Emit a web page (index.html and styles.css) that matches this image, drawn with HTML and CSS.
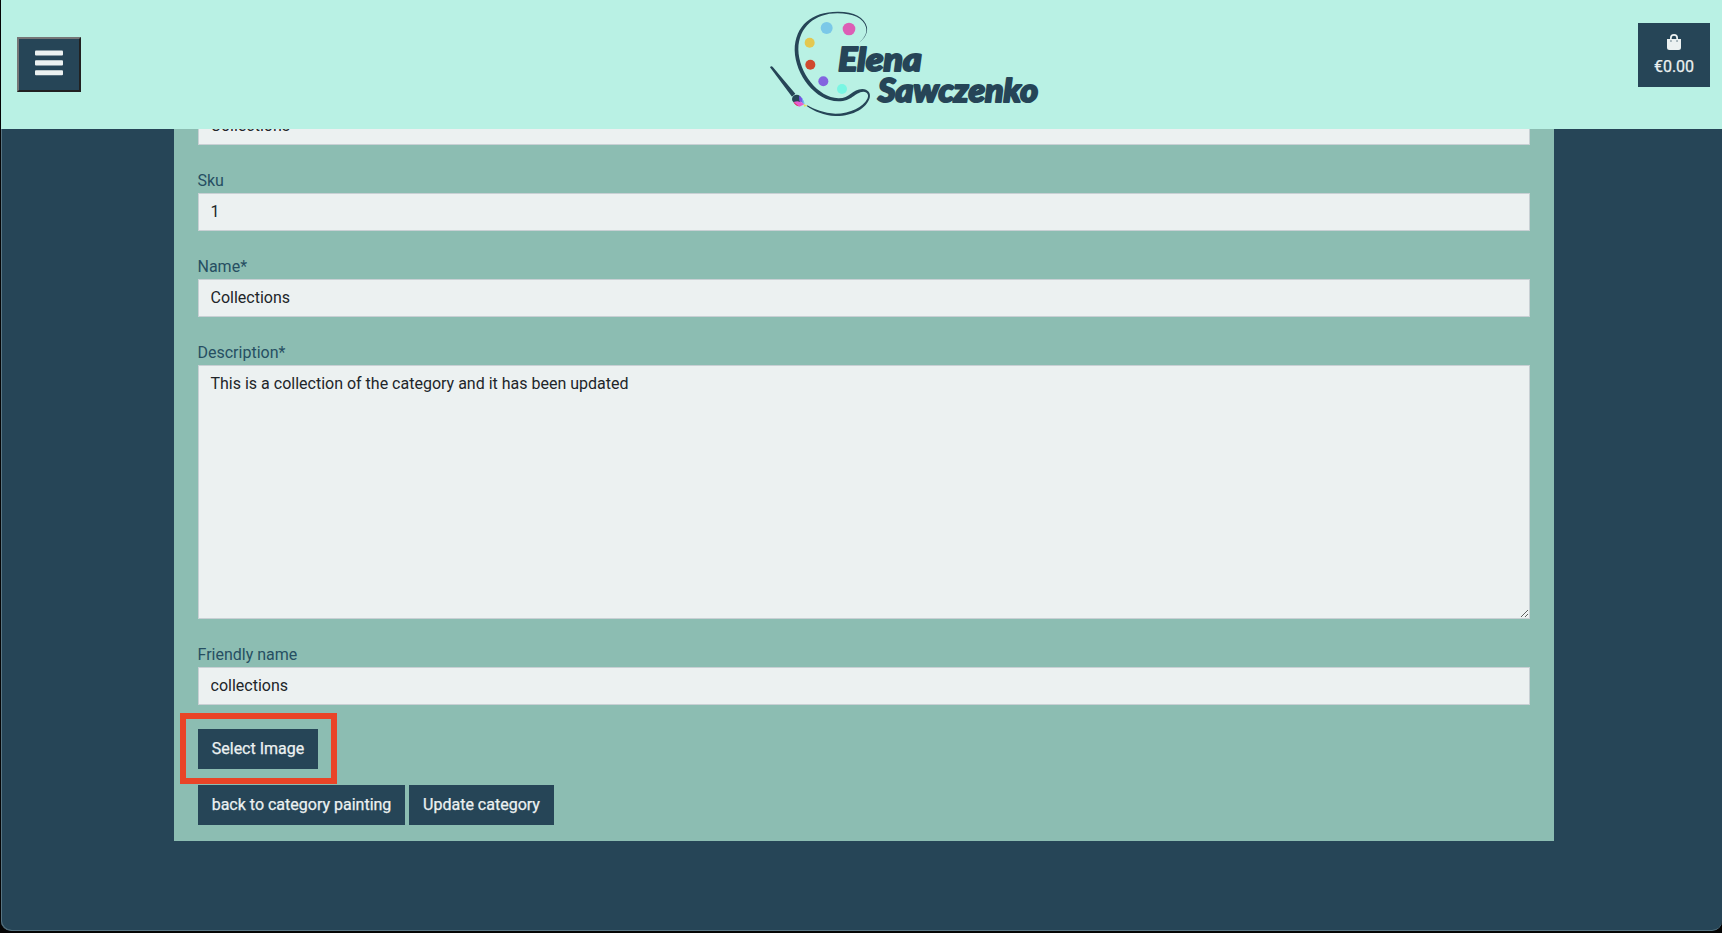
FILE: index.html
```html
<!DOCTYPE html>
<html lang="en">
<head>
<meta charset="utf-8">
<title>Elena Sawczenko</title>
<link rel="stylesheet" href="styles.css">
</head>
<body>
<div class="window">
  <header class="header">
    <button class="menu" type="button" aria-label="Menu">
      <svg width="28" height="26" viewBox="0 0 28 26"><g fill="#ecf1f1"><rect y="0.4" width="28" height="5.1" rx="1"/><rect y="10.3" width="28" height="5.1" rx="1"/><rect y="20.2" width="28" height="5.1" rx="1"/></g></svg>
    </button>
    <svg class="logo" width="300" height="129" viewBox="0 0 900 387">
      <g fill="#264557">
        <path d="M326 129C344 114 352 99 348 82C341 54 309 40 262 40C196 40 146 80 145 148C146 219 204 293 265 295C298 296 307 268 337 267C354 268 363 279 359 294C350 324 309 349 256 348C222 347 193 334 170 318L172 316C193 328 222 340 256 341C302 341 340 320 352 296C357 286 354 276 340 275C314 277 306 304 265 304C196 304 136 225 134 151C135 76 186 35 262 35C309 34 344 51 351 82C353 101 344 116 326 129Z"/>
        <path d="M60 202Q64 195 69 202L136 281L126 290Z"/>
        <ellipse cx="140" cy="297" rx="14" ry="13"/>
      </g>
      <path d="M147 288Q159 291 162 311L148 302Z" fill="#7752e5"/>
      <path d="M131 306Q148 299 163 313L148 320Q136 317 131 306Z" fill="#e65bd2"/>
      <path d="M130 305L146 318Q135 317 130 305Z" fill="#d54051"/>
      <path d="M155 292L165 312L158 308Z" fill="#67c5ee"/>
      <path d="M161 312L173 317L162 320Z" fill="#e5dd62"/>
      <circle cx="230" cy="84" r="18" fill="#7bc8e8"/>
      <circle cx="297" cy="87" r="19" fill="#dc5eb5"/>
      <circle cx="179" cy="128" r="15" fill="#e4c850"/>
      <circle cx="181" cy="194" r="15" fill="#d0482e"/>
      <circle cx="220" cy="244" r="15" fill="#8364df"/>
      <circle cx="276" cy="267" r="15" fill="#79f6e3"/>
      <text class="wordmark" x="265" y="213" textLength="250" lengthAdjust="spacingAndGlyphs">Elena</text>
      <text class="wordmark" x="384" y="306" textLength="480" lengthAdjust="spacingAndGlyphs">Sawczenko</text>
    </svg>
    <a class="bag">
      <svg width="14" height="16" viewBox="0 0 14 16"><path d="M3 5V4a4 4 0 0 1 8 0v1h3v8.500a2.500 2.500 0 0 1-2.500 2.500h-9A2.500 2.500 0 0 1 0 13.500V5zM4.700 5h4.600V4a2.300 2.300 0 0 0-4.600 0z" fill="#ecf1f1" fill-rule="evenodd"/><path d="M3.100 6.300h1.700v1.500H3.100zM9.200 6.300h1.700v1.500H9.200z" fill="#8799a2"/></svg>
      <span>€0.00</span>
    </a>
  </header>
  <main class="page">
    <form class="card">
      <input class="field clipped" type="text" value="Collections" aria-label="Category">
      <label class="label" for="sku">Sku</label>
      <input class="field" id="sku" type="text" value="1">
      <label class="label" for="name">Name*</label>
      <input class="field" id="name" type="text" value="Collections">
      <label class="label" for="description">Description*</label>
      <textarea class="field area" id="description" rows="10" spellcheck="false">This is a collection of the category and it has been updated</textarea>
      <label class="label" for="friendly">Friendly name</label>
      <input class="field" id="friendly" type="text" value="collections">
      <div class="upload">
        <button class="btn select" type="button">Select Image</button>
        <span class="highlight"></span>
      </div>
      <div class="actions">
        <button class="btn back" type="button">back to category painting</button>
        <button class="btn update" type="button">Update category</button>
      </div>
    </form>
  </main>
</div>
</body>
</html>
```
FILE: styles.css
```css
* { box-sizing: border-box; }
body {
  margin: 0;
  height: 933px;
  overflow: hidden;
  padding: 0 0 2px 1px;
  background: #050505;
  font: 400 16px/24px Roboto, sans-serif;
}
.window {
  height: 931px;
  overflow: hidden;
  background: #264557;
  border-bottom: 1px solid #577482;
  border-radius: 0 0 10px 10px;
  box-shadow: inset 1px 0 #577482;
}
.header {
  display: flex;
  align-items: flex-start;
  height: 129px;
  padding-left: 16px;
  padding-right: 12px;
  background: #b9f1e4;
}
.menu {
  display: flex;
  justify-content: center;
  width: 64px;
  height: 55px;
  margin-top: 37px;
  padding: 11px 0 0;
  background: #264557;
  border: 2px solid;
  border-color: #767676 #212121 #212121 #767676;
}
.logo { margin-left: 669px; }
.wordmark {
  font: italic 900 94px Lato, sans-serif;
  fill: #264557;
  stroke: #264557;
  stroke-width: 6px;
  stroke-linejoin: round;
}
.bag {
  display: flex;
  flex-direction: column;
  align-items: center;
  width: 72px;
  height: 64px;
  margin: 23px 0 0 auto;
  padding-top: 11px;
  background: #264557;
  color: #ecf1f1;
  -webkit-text-stroke: 0.25px #ecf1f1;
}
.bag span { margin-top: 5px; }
.page {
  padding-left: 173px;
  height: 801px;
  overflow: hidden;
}
.card {
  display: flex;
  flex-direction: column;
  width: 1380px;
  height: 712px;
  padding: 0 24px;
  background: #8cbdb2;
}
.label { height: 24px; color: #264f62; text-indent: -0.5px; }
.field {
  display: block;
  width: 100%;
  height: 38px;
  flex-shrink: 0;
  margin: 0 0 24px;
  padding: 5px 12px 7px 11.5px;
  border: 1px solid #c8d0d4;
  border-radius: 0;
  background: #ecf1f1;
  color: #212529;
  font: inherit;
  outline: 0;
}
.clipped { margin-top: -22px; }
.area { height: 254px; padding-top: 6px; resize: vertical; }
.upload { position: relative; height: 40px; }
.highlight {
  position: absolute;
  left: -18px;
  top: -16px;
  width: 157px;
  height: 71px;
  border: 6px solid #e94427;
}
.btn {
  height: 40px;
  padding: 0;
  border: 0;
  background: #264557;
  color: #ecf1f1;
  font: 400 16px/24px Roboto, sans-serif;
  -webkit-text-stroke: 0.25px #ecf1f1;
}
.select { width: 120px; }
.actions { display: flex; gap: 4px; margin-top: 16px; }
.back { width: 207px; }
.update { width: 145px; }
```
